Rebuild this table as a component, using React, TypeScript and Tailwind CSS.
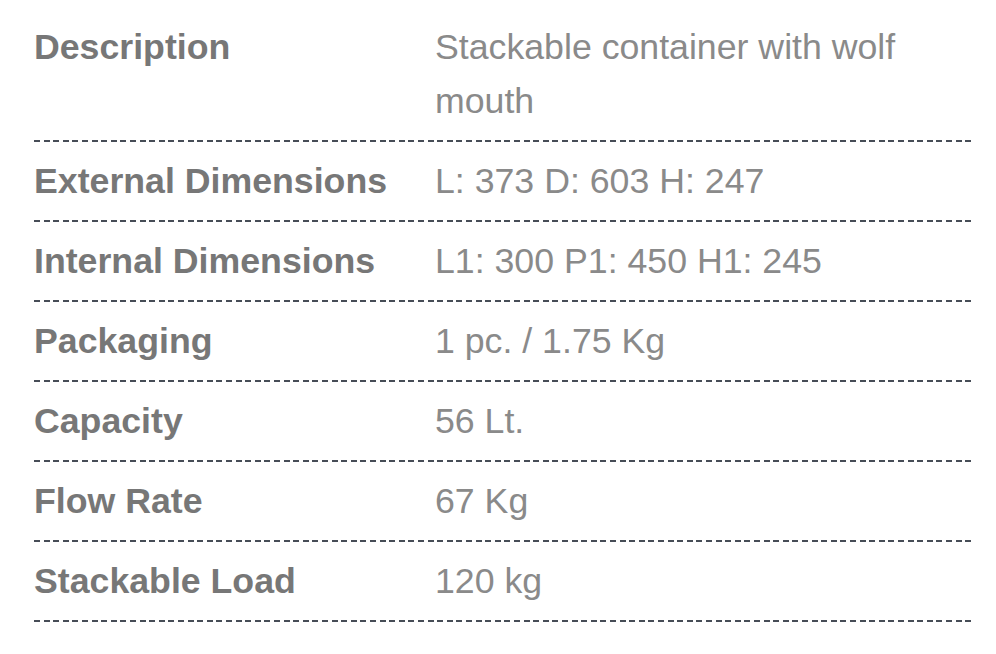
import React from 'react';

const rows: { label: string; value: string }[] = [
  { label: 'Description', value: 'Stackable container with wolf mouth' },
  { label: 'External Dimensions', value: 'L: 373 D: 603 H: 247' },
  { label: 'Internal Dimensions', value: 'L1: 300 P1: 450 H1: 245' },
  { label: 'Packaging', value: '1 pc. / 1.75 Kg' },
  { label: 'Capacity', value: '56 Lt.' },
  { label: 'Flow Rate', value: '67 Kg' },
  { label: 'Stackable Load', value: '120 kg' },
];

function DashedRule() {
  return (
    <div className="h-[2px] w-full bg-[repeating-linear-gradient(90deg,#474d57_0px,#474d57_6px,transparent_6px,transparent_9.6px)]" />
  );
}

export default function App() {
  return (
    <div className="min-h-[654px] w-full bg-white pl-[34px] pr-[22px] pt-[8px] font-['Liberation_Sans',Arial,sans-serif]">
      {rows.map((row) => (
        <div key={row.label}>
          <div className="grid grid-cols-[401px_1fr] py-[12px] text-[35.7px] leading-[54px]">
            <div className="font-bold text-[#777777] whitespace-nowrap">{row.label}</div>
            <div className="max-w-[500px] text-[#8a8a8a]">{row.value}</div>
          </div>
          <DashedRule />
        </div>
      ))}
    </div>
  );
}
